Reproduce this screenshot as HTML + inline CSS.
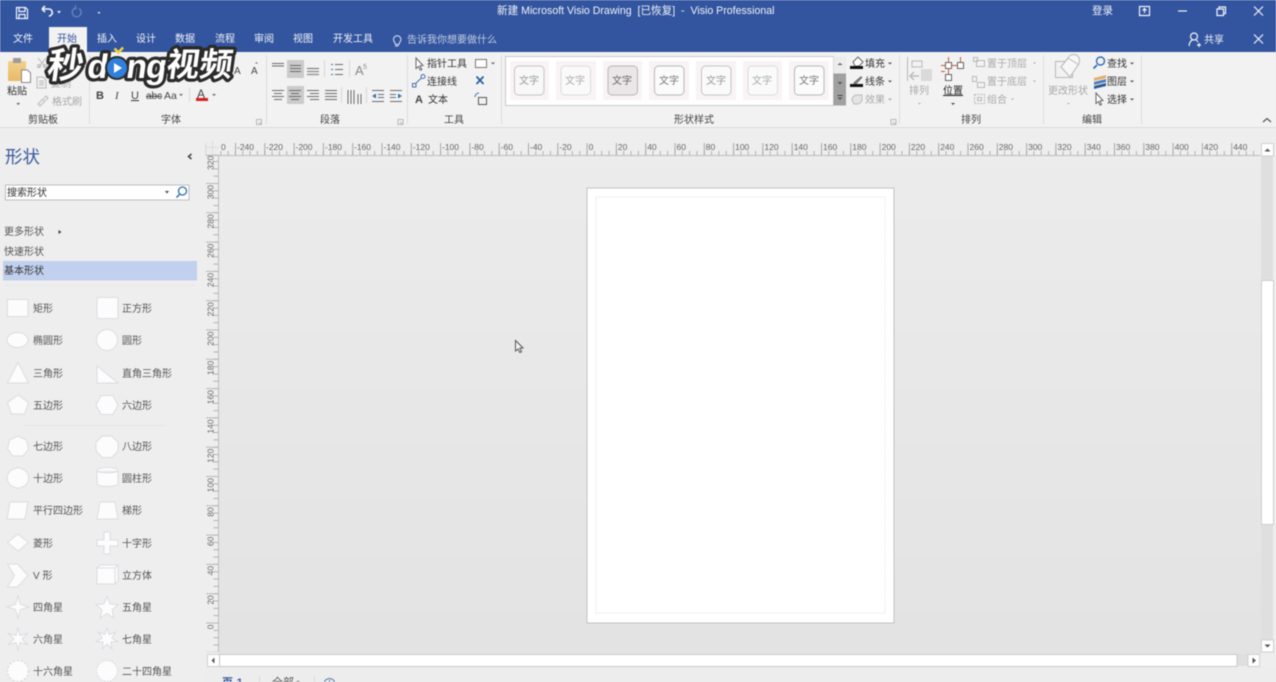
<!DOCTYPE html>
<html lang="zh"><head><meta charset="utf-8"><title>Visio</title>
<style>
html,body{margin:0;padding:0;background:#ececec;overflow:hidden}
svg{display:block;filter:blur(.4px)}
text{font-family:"Liberation Sans","Noto Sans CJK SC",sans-serif;font-size:10px;fill:#444}
.w text{fill:#f0f3fa}
.g text{fill:#a8a8a8}
.s text{fill:#555}
.rh text{font-size:8.5px;fill:#666}
.rv text{font-size:8.5px;fill:#666;text-anchor:end}
.sh *{fill:#fcfcfd;stroke:#dddbe2;stroke-width:1}
.ic{fill:none;stroke:#6a6a6a;stroke-width:1}
.ig{fill:none;stroke:#b8b8b8;stroke-width:1}
.wm{font-weight:bold;fill:#fff;stroke:#2a2a2a;stroke-width:6.5px;paint-order:stroke;stroke-linejoin:round}
</style></head><body>
<svg width="1276" height="682" viewBox="0 0 1276 682" xmlns="http://www.w3.org/2000/svg">
<defs>
<linearGradient id="cv" x1="0" y1="0" x2="0" y2="1"><stop offset="0" stop-color="#ececec"/><stop offset="1" stop-color="#e3e3e3"/></linearGradient>
<linearGradient id="clip" x1="0" y1="0" x2="0" y2="1"><stop offset="0" stop-color="#f2d08a"/><stop offset="1" stop-color="#e9b968"/></linearGradient>
</defs>
<!-- backgrounds -->
<rect width="1276" height="682" fill="#eeeeee"/>
<rect x="219" y="155" width="1042" height="499" fill="url(#cv)"/>
<rect width="1276" height="52" fill="#33559f"/>
<rect y="52" width="1276" height="75" fill="#f2f2f2"/>
<rect y="127" width="1276" height="1" fill="#dcdcdc"/>
<rect x="49" y="27" width="38" height="26" fill="#f2f2f2"/>

<!-- title bar -->
<g class="w">
<text x="497" y="14" style="font-size:10.6px;white-space:pre">新建 Microsoft Visio Drawing  [已恢复]  -  Visio Professional</text>
<text x="1092" y="14" style="font-size:10.5px">登录</text>
<text x="13" y="42">文件</text><text x="97" y="42">插入</text><text x="136" y="42">设计</text><text x="175" y="42">数据</text><text x="215" y="42">流程</text><text x="254" y="42">审阅</text><text x="293" y="42">视图</text><text x="333" y="42">开发工具</text>
<text x="407" y="43" style="fill:#c3cde3">告诉我你想要做什么</text>
<text x="1204" y="43">共享</text>
</g>
<text x="57" y="42" style="fill:#33559f">开始</text>
<g fill="none" stroke="#f0f3fa" stroke-width="1.2">
<path d="M16.500 7.500h9l2 2v9h-11z"/><path d="M19 7.500v4h6v-4M19 18.500v-4h6v4"/>
<path d="M42 9l3-3M42 9l3 3M42.500 9h6a3.500 3.500 0 0 1 2 6.500l-1.500 .8" stroke-width="1.600"/>
<path d="M1139.500 6.500h10v9h-10z"/><path d="M1144.500 13V8.500M1142.500 10.500l2-2 2 2"/>
<path d="M1178 11h9"/><path d="M1217 9h6.500v6.500h-6.500zM1219 9V7h6.500v6.500h-2"/>
<path d="M1254 6.500l9 9M1263 6.500l-9 9M1254 34.500l9 9M1263 34.500l-9 9"/>
<circle cx="1194" cy="36.500" r="3.500"/><path d="M1189 46c.5-4 2-5.500 3.500-6M1199 43v4M1197 45h4M1196 40c1 .5 1.500 1 2 2"/>
</g>
<path d="M57 11h4l-2 2.500zM97.500 10h3M97.500 12h3l-1.500 2z" fill="#e5e9f3"/>
<path d="M79 8.500a4.500 4.500 0 1 1-3.500-.5M75 5.500l1 3 -3 .5" fill="none" stroke="#6883bb" stroke-width="1.300"/>
<path d="M395 46h3.500M395.500 44.500c0-2-2-2.500-2-5a3.700 3.700 0 0 1 7.400 0c0 2.500-2 3-2 5z" fill="none" stroke="#dfe4f0"/>

<!-- ribbon separators -->
<g fill="#dcdcdc"><rect x="89" y="55" width="1" height="69"/><rect x="266" y="55" width="1" height="69"/><rect x="407" y="55" width="1" height="69"/><rect x="501" y="55" width="1" height="69"/><rect x="899" y="55" width="1" height="69"/><rect x="1043" y="55" width="1" height="69"/><rect x="1141" y="55" width="1" height="69"/></g>

<!-- group labels -->
<g>
<text x="28" y="123">剪贴板</text><text x="161" y="123">字体</text><text x="320" y="123">段落</text><text x="444" y="123">工具</text><text x="674" y="123">形状样式</text><text x="961" y="123">排列</text><text x="1082" y="123">编辑</text>
</g>
<g class="ig"><path d="M256.500 119.500h5v5h-5zM259 122l2 2M398 119.500h5v5h-5zM400 122l2 2M891 119.500h5v5h-5zM893 122l2 2"/></g>
<path d="M1263 122l4-3.500 4 3.500" fill="none" stroke="#555" stroke-width="1.200"/>

<!-- clipboard -->
<rect x="8" y="61" width="18" height="20" rx="1" fill="url(#clip)"/>
<rect x="13" y="58" width="8" height="5" fill="#9b9b9b"/>
<path d="M21.500 70h6l3 3v9.500h-9z" fill="#fff" stroke="#888"/>
<text x="7" y="94.500" style="fill:#333">粘贴</text>
<path d="M16.500 103h3.500l-1.750 2z" fill="#555"/>
<g class="ig"><path d="M38 58l8 10M46 58l-8 10"/><circle cx="39" cy="66" r="1.500"/><circle cx="45" cy="66" r="1.500"/><path d="M37 77h6l3 3v8h-9zM39 81h5M39 83h5M39 85h5"/><path d="M38 104l5-5 2 2-5 5zM44 98l2-2 2 2-2 2"/></g>
<g class="g"><text x="51" y="87">复制</text><text x="52" y="105">格式刷</text></g>

<!-- font group -->
<g>
<text x="96" y="99" style="font-weight:bold;font-size:11px">B</text>
<text x="115" y="99" style="font-style:italic;font-size:11px;font-family:'Liberation Serif',serif">I</text>
<text x="131" y="99" style="font-size:11px;text-decoration:underline">U</text>
<text x="146" y="99" style="font-size:10px;text-decoration:line-through">abc</text>
<text x="164" y="99" style="font-size:10.500px">Aa</text>
<text x="197" y="98" style="font-size:12px">A</text>
<text x="234" y="74" style="font-size:10px">A</text><text x="251" y="74" style="font-size:10px">A</text>
</g>
<rect x="196" y="98" width="12" height="3" fill="#d92020"/>
<rect x="189" y="88" width="1" height="14" fill="#d8d8d8"/>
<path d="M179 94h4l-2 2zM212 94h4l-2 2zM255 63.500h3l-1.500 -1.500z" fill="#666"/>

<!-- paragraph group -->
<rect x="287" y="60" width="17" height="18" fill="#cbcbcb"/>
<rect x="287" y="86" width="17" height="18" fill="#cbcbcb"/>
<g class="ic">
<path d="M272 63.500h12M272 66h12M290 65.500h11M290 68.500h11M290 71.500h11M307 68.500h12" />
<path d="M307 71.500h12M307 74.500h12" stroke="#999" stroke-width="1.500"/>
<path d="M272 90.500h12M274 93.500h8M272 96.500h12M274 99.500h8M289 90.500h12M291 93.500h8M289 96.500h12M291 99.500h8M307 90.500h12M310 93.500h9M307 96.500h12M310 99.500h9M325 90.500h12M325 93.500h12M325 96.500h12M325 99.500h12"/>
<path d="M335 64.500h8M335 69.500h8M335 74.500h8" /><path d="M331 64.500h2M331 69.500h2M331 74.500h2" stroke="#3a6fb5"/>
<path d="M348 90v14M351 90v14M354 90v14M358 94v10M361 94v10"/>
<path d="M372 90.500h12M378 94.500h6M378 97.500h6M372 101.500h12M390 90.500h12M390 94.500h6M390 97.500h6M390 101.500h12"/>
</g>
<path d="M372 96l4-2.500v5zM402 96l-4-2.500v5z" fill="#3a6fb5"/>
<rect x="324" y="60" width="1" height="17" fill="#d8d8d8"/><rect x="349" y="60" width="1" height="17" fill="#d8d8d8"/><rect x="341" y="87" width="1" height="16" fill="#d8d8d8"/><rect x="366" y="87" width="1" height="16" fill="#d8d8d8"/>
<text x="355" y="75" style="font-size:13px;fill:#888">A</text><text x="363" y="69" style="font-size:7px;fill:#888">5</text>

<!-- tools group -->
<path d="M416 58l7 7.500-3 .3 1.800 3.700-1.500.7-1.800-3.700-2.500 2z" fill="#fff" stroke="#666"/>
<text x="427" y="67" style="fill:#333">指针工具</text>
<rect x="475.500" y="59.500" width="11" height="8" fill="#fff" stroke="#777"/>
<path d="M491 62.500h4l-2 2z" fill="#666"/>
<g fill="none" stroke="#4a6ea8"><rect x="412.500" y="83.500" width="3.500" height="3.500"/><circle cx="423" cy="76.500" r="2"/><path d="M416 83l5.500-5"/></g>
<text x="427" y="85" style="fill:#333">连接线</text>
<path d="M476.500 76.500l7 7.500M483.500 76.500l-7 7.500" stroke="#2f5fa5" stroke-width="1.800"/>
<text x="415" y="103" style="font-size:11px;font-weight:bold;fill:#444">A</text>
<text x="428" y="103" style="fill:#333">文本</text>
<g fill="none" stroke="#555"><rect x="478.500" y="97.500" width="8" height="7"/><path d="M475 97a4 4 0 0 1 4-4" stroke="#3a6fb5"/></g>

<!-- shape styles gallery -->
<rect x="505.500" y="56.500" width="328" height="49" fill="#fff" stroke="#c9c9c9"/>
<rect x="833.500" y="56.500" width="12.500" height="17" fill="#ececec"/>
<rect x="833.500" y="73.500" width="12.500" height="32" fill="#a0a0a0"/>
<path d="M837.500 65h5l-2.500-2zM837.500 82h5l-2.500 2.500zM837.500 97.500h5l-2.500 2.500z" fill="#555" stroke="none"/>
<path d="M837.500 95.500h5" stroke="#444"/>
<g fill="#f9f3f5"><rect x="510" y="61" width="39" height="39"/><rect x="556" y="61" width="40" height="39"/><rect x="603" y="61" width="39" height="39"/><rect x="649" y="61" width="40" height="39"/><rect x="696" y="61" width="40" height="39"/><rect x="743" y="61" width="39" height="39"/><rect x="789" y="61" width="40" height="39"/></g>
<g stroke-width="1">
<rect x="514.500" y="66" width="29.500" height="29" rx="4" fill="#f8f8f8" stroke="#c4c4c4"/>
<rect x="561" y="66" width="29.500" height="29" rx="4" fill="#fafafa" stroke="#dcdcdc"/>
<rect x="608" y="66" width="29.500" height="29" rx="4" fill="#ebe7e9" stroke="#b5b5b5"/>
<rect x="654.500" y="66" width="29.500" height="29" rx="4" fill="#fbfbfb" stroke="#b8b8b8"/>
<rect x="701.500" y="66" width="29.500" height="29" rx="4" fill="#fafafa" stroke="#c4c4c4"/>
<rect x="748" y="66" width="29.500" height="29" rx="4" fill="#fafafa" stroke="#dcdcdc"/>
<rect x="794.500" y="66" width="29.500" height="29" rx="4" fill="#fbfbfb" stroke="#b8b8b8"/>
</g>
<g style="font-size:10px">
<text x="519" y="84" style="fill:#999">文字</text><text x="565" y="84" style="fill:#aaa">文字</text><text x="612" y="84" style="fill:#666">文字</text><text x="659" y="84" style="fill:#777">文字</text><text x="706" y="84" style="fill:#999">文字</text><text x="752" y="84" style="fill:#aaa">文字</text><text x="799" y="84" style="fill:#777">文字</text>
</g>
<!-- fill/line/effect -->
<path d="M853 62l5-5 5 5-4 4h-4z" fill="#fff" stroke="#666"/><rect x="850" y="66" width="13" height="3" fill="#111"/>
<path d="M853 83l8-7 1.500 1.500-7 7.500z" fill="#777"/><rect x="850" y="84" width="13" height="3" fill="#111"/>
<path d="M852 100a5 5 0 0 1 5-5h5v5a5 5 0 0 1-5 4h-3z" fill="#e4e4e4" stroke="#bbb"/>
<text x="865" y="67" style="fill:#333">填充</text><text x="865" y="85" style="fill:#333">线条</text>
<g class="g"><text x="865" y="103">效果</text></g>
<path d="M888 62.500h4l-2 2zM888 80.500h4l-2 2z" fill="#555"/><path d="M888 98.500h4l-2 2z" fill="#aaa"/>

<!-- arrange group -->
<g class="ig"><path d="M907.500 57v24M912 61h10v6h-10z"/></g><rect x="921" y="69" width="11" height="12" fill="#dadada"/><path d="M911 76h8M914 72l-4 4 4 4" fill="none" stroke="#bbb" stroke-width="1.400"/>
<g class="g"><text x="909" y="94">排列</text><text x="987" y="67">置于顶层</text><text x="987" y="85">置于底层</text><text x="987" y="103">组合</text><text x="1048" y="94">更改形状</text></g>
<path d="M918 103h3l-1.500 1.500zM1067 103h3l-1.500 1.500zM1033 62.500h3l-1.500 1.500zM1033 80.500h3l-1.500 1.500zM1011 98.500h3l-1.500 1.500z" fill="#aaa"/>
<g fill="#fff" stroke="#666"><rect x="945.500" y="62.500" width="6" height="6"/><rect x="957.500" y="62.500" width="6" height="6"/><rect x="945.500" y="74.500" width="6" height="6"/></g>
<path d="M941 65.500h4M952 65.500h5M948.500 57v5M960.500 57v5M948.500 69v5M941 71.500h4" stroke="#c85a3e" fill="none"/>
<text x="943" y="94" style="fill:#222;text-decoration:underline">位置</text>
<path d="M951 103h4l-2 2z" fill="#444"/>
<g class="ig"><rect x="973.500" y="57.500" width="4" height="4"/><rect x="976.500" y="60.500" width="8" height="6"/><rect x="972.500" y="76.500" width="4" height="5"/><rect x="977.500" y="82.500" width="7" height="5"/><rect x="974.500" y="94.500" width="10" height="9" stroke-dasharray="2 1"/><rect x="977.500" y="97.500" width="4" height="3"/></g>
<g class="ig"><rect x="1055.500" y="61.500" width="17" height="16"/><path d="M1068 58a6 6 0 0 1 11 5l-1 2-8 12-9-10z" fill="#f7f7f7"/><path d="M1061 67l7-9 11 7"/></g>
<!-- editing -->
<circle cx="1100.500" cy="61" r="4" fill="none" stroke="#2d6db5" stroke-width="1.400"/><path d="M1097 65l-3.500 3.500" stroke="#2d6db5" stroke-width="1.800"/>
<path d="M1094 78l12-3v3l-12 3z" fill="#e6ad62"/><path d="M1094 82l12-3v3l-12 3z" fill="#4a7fc0"/><path d="M1094 86l12-3v3l-12 3z" fill="#2d5a90"/>
<path d="M1096 93l7 7.500-3 .3 1.500 3.700-1.500.7-1.500-3.700-2.500 2z" fill="#fff" stroke="#666"/>
<text x="1107" y="67" style="fill:#333">查找</text><text x="1107" y="85" style="fill:#333">图层</text><text x="1107" y="103" style="fill:#333">选择</text>
<path d="M1130 62.500h4l-2 2zM1130 80.500h4l-2 2zM1130 98.500h4l-2 2z" fill="#555"/>

<!-- shapes pane -->
<text x="5" y="163" style="font-size:17.500px;fill:#3a5a9e">形状</text>
<path d="M191.500 154l-3 2.500 3 2.500" fill="none" stroke="#444" stroke-width="1.500"/>
<rect x="5.500" y="185" width="183.500" height="15" fill="#fff" stroke="#bcbcbc"/>
<text x="7" y="196" style="fill:#333">搜索形状</text>
<path d="M165 191h4l-2 2.500z" fill="#444"/>
<circle cx="182.500" cy="191" r="4" fill="none" stroke="#2d6db5" stroke-width="1.300"/><path d="M179.500 194.500l-3 3" stroke="#2d6db5" stroke-width="1.500"/>
<text x="4" y="235" style="fill:#555">更多形状</text><path d="M58.500 230l3 2-3 2z" fill="#444"/>
<text x="4" y="255" style="fill:#555">快速形状</text>
<rect x="3" y="261" width="194" height="19.500" fill="#c1d0ee"/>
<text x="4" y="274" style="fill:#333">基本形状</text>
<rect x="5" y="285" width="190" height="1" fill="#e8e8e8"/>
<rect x="25" y="425" width="140" height="1" fill="#e6e6e6"/>

<g class="sh">
<rect x="7.500" y="299.500" width="20.500" height="17"/>
<rect x="97" y="297.500" width="21" height="21"/>
<ellipse cx="17.500" cy="340" rx="10.500" ry="7.500"/>
<circle cx="107" cy="340" r="10.500"/>
<path d="M18 362.500l10.500 20.500h-21z"/>
<path d="M97 366v17h21z"/>
<path d="M18 395l10.500 7.500-4 11.500h-13l-4-11.500z"/>
<path d="M101 395.500h12l5 9.500-5 9.500h-12l-5-9.500z"/>
<path d="M18 436l8.500 4 2 9-5.500 7h-10l-5.500-7 2-9z"/>
<path d="M102.500 436h9l6.500 6v9l-6.500 6.500h-9l-6.500-6.500v-9z"/>
<path d="M18 467.500l7 2.500 3.500 5 0 6-3.500 5-7 2.500-7-2.500-3.500-5v-6l3.500-5z"/>
<path d="M97 470.500c0-4 21-4 21 0v13c0 4-21 4-21 0zM97 470.500c0 3 21 3 21 0"/>
<path d="M10 502h18l-3 17h-18z"/>
<path d="M100 502h15l3 17h-21z"/>
<path d="M18 534l10.500 8.500-10.500 8.500-10.500-8.500z"/>
<path d="M104 532h6v8h8v6h-8v8h-6v-8h-7v-6h7z"/>
<path d="M7.500 564h10l10.500 11.500-10.500 11.500h-10l7-11.500z"/>
<path d="M97 568h18v16h-18zM97 568l3-3h18l-3 3zM115 568l3-3v16l-3 3z"/>
<path d="M18 596l2.500 8.500 8.500 2.500-8.500 2.500-2.500 8.500-2.500-8.500-8.500-2.500 8.500-2.500z"/>
<path d="M107 596.500l3 7.500 8 .5-6 5.500 2 8-7-4.500-7 4.500 2-8-6-5.500 8-.5z"/>
<path d="M18 628L20 635.500 27.500 633.500 22 639 27.500 644.500 20 642.500 18 650 16 642.500 8.500 644.500 14 639 8.500 633.500 16 635.500z"/>
<path d="M107 628L109.200 634.500 115.600 632.100 111.900 637.900 117.700 641.400 110.900 642.100 111.800 648.900 107 644 102.200 648.900 103.100 642.100 96.300 641.400 102.100 637.900 98.400 632.100 104.800 634.500z"/>
<circle cx="18" cy="671" r="10.500" stroke-dasharray="2 2" style="stroke-width:1.500"/>
<circle cx="107" cy="671" r="10.500" stroke-dasharray="1.500 1.500" style="stroke-width:1.500"/>
</g>
<g class="s">
<text x="33" y="312">矩形</text><text x="122" y="312">正方形</text>
<text x="33" y="344">椭圆形</text><text x="122" y="344">圆形</text>
<text x="33" y="377">三角形</text><text x="122" y="377">直角三角形</text>
<text x="33" y="409">五边形</text><text x="122" y="409">六边形</text>
<text x="33" y="450">七边形</text><text x="122" y="450">八边形</text>
<text x="33" y="482">十边形</text><text x="122" y="482">圆柱形</text>
<text x="33" y="514">平行四边形</text><text x="122" y="514">梯形</text>
<text x="33" y="547">菱形</text><text x="122" y="547">十字形</text>
<text x="33" y="579">V 形</text><text x="122" y="579">立方体</text>
<text x="33" y="611">四角星</text><text x="122" y="611">五角星</text>
<text x="33" y="643">六角星</text><text x="122" y="643">七角星</text>
<text x="33" y="675">十六角星</text><text x="122" y="675">二十四角星</text>
</g>

<!-- rulers -->
<g stroke="#b2b2b2" fill="none">
<path d="M206 155.500H1260" stroke="#bdbdbd"/>
<path d="M220.300 153H1260" stroke-width="4" stroke-dasharray="1 6.325"/>
<path d="M205.700 149H1260" stroke-width="12" stroke-dasharray="1 28.300" stroke="#a8a8a8"/>
<path d="M218.500 155V652" stroke="#bdbdbd"/>
<path d="M216 153.700V652" stroke-width="5" stroke-dasharray="1 6.325"/>
<path d="M212 153.700V652" stroke-width="12" stroke-dasharray="1 28.300" stroke="#b8b8b8"/>
</g>
<g class="rh">
<text x="221" y="150">0</text><text x="237" y="150">-240</text><text x="266" y="150">-220</text><text x="295.500" y="150">-200</text><text x="325" y="150">-180</text><text x="354" y="150">-160</text><text x="383.500" y="150">-140</text><text x="412.800" y="150">-120</text><text x="442" y="150">-100</text><text x="471.400" y="150">-80</text><text x="500.700" y="150">-60</text><text x="530" y="150">-40</text><text x="559.300" y="150">-20</text><text x="588.600" y="150">0</text><text x="617.900" y="150">20</text><text x="647.200" y="150">40</text><text x="676.500" y="150">60</text><text x="705.800" y="150">80</text><text x="735.100" y="150">100</text><text x="764.400" y="150">120</text><text x="793.700" y="150">140</text><text x="823" y="150">160</text><text x="852.300" y="150">180</text><text x="881.600" y="150">200</text><text x="910.900" y="150">220</text><text x="940.200" y="150">240</text><text x="969.500" y="150">260</text><text x="998.800" y="150">280</text><text x="1028.100" y="150">300</text><text x="1057.400" y="150">320</text><text x="1086.700" y="150">340</text><text x="1116" y="150">360</text><text x="1145.300" y="150">380</text><text x="1174.600" y="150">400</text><text x="1203.900" y="150">420</text><text x="1233.200" y="150">440</text>
</g>
<g class="rv">
<text transform="translate(213.500 155.700) rotate(-90)">320</text>
<text transform="translate(213.500 185) rotate(-90)">300</text>
<text transform="translate(213.500 214.300) rotate(-90)">280</text>
<text transform="translate(213.500 243.600) rotate(-90)">260</text>
<text transform="translate(213.500 272.900) rotate(-90)">240</text>
<text transform="translate(213.500 302.200) rotate(-90)">220</text>
<text transform="translate(213.500 331.500) rotate(-90)">200</text>
<text transform="translate(213.500 360.800) rotate(-90)">180</text>
<text transform="translate(213.500 390.100) rotate(-90)">160</text>
<text transform="translate(213.500 419.400) rotate(-90)">140</text>
<text transform="translate(213.500 448.700) rotate(-90)">120</text>
<text transform="translate(213.500 478) rotate(-90)">100</text>
<text transform="translate(213.500 507.300) rotate(-90)">80</text>
<text transform="translate(213.500 536.600) rotate(-90)">60</text>
<text transform="translate(213.500 565.900) rotate(-90)">40</text>
<text transform="translate(213.500 595.200) rotate(-90)">20</text>
<text transform="translate(213.500 624.500) rotate(-90)">0</text>
</g>
<rect x="206" y="141" width="13" height="13.500" fill="#ededed"/>
<path d="M212.500 141v13M206 147.500h13" stroke="#dcdcdc"/>

<!-- page -->
<rect x="587" y="188" width="307" height="435" fill="#fff" stroke="#c2c2c2"/>
<rect x="596" y="197" width="289" height="416" fill="none" stroke="#e8e8e8" stroke-dasharray="2 1"/>

<!-- cursor -->
<path d="M515.500 340.500v10.500l2.500-2 1.800 3.500 1.800-.8-1.800-3.500 3.200-.2z" fill="#f4f4f4" stroke="#555"/>

<!-- vertical scrollbar -->
<rect x="1261" y="143" width="12" height="509" fill="#dfdfdf"/>
<rect x="1261.500" y="143.500" width="12" height="12.500" fill="#fff" stroke="#cfcfcf"/>
<path d="M1264.500 151.500h6l-3-3z" fill="#555"/>
<rect x="1261.500" y="280.500" width="12" height="244" fill="#fff" stroke="#cfcfcf"/>
<rect x="1261.500" y="640" width="12" height="12" fill="#fff" stroke="#cfcfcf"/>
<path d="M1264.500 644.500h6l-3 3z" fill="#555"/>
<!-- horizontal scrollbar -->
<rect x="207" y="654" width="1052" height="12" fill="#dfdfdf"/>
<rect x="207.500" y="654.500" width="12" height="12" fill="#fff" stroke="#cfcfcf"/>
<path d="M214.500 657.500v6l-3-3z" fill="#555"/>
<rect x="219.500" y="654.500" width="1017.500" height="12" fill="#fff" stroke="#c8c8c8"/>
<rect x="1248" y="654.500" width="11.500" height="12" fill="#fff" stroke="#cfcfcf"/>
<path d="M1252.500 657.500v6l3.500-3z" fill="#555"/>
<!-- status -->
<rect x="205" y="667" width="1071" height="15" fill="#ededed"/>
<text x="222" y="686" style="font-size:11px;fill:#3a5a9e;font-weight:bold">页-1</text>
<text x="272" y="686" style="font-size:11px;fill:#555">全部</text>
<path d="M296 681h4l-2 1z" fill="#555"/>
<rect x="259" y="676" width="1" height="6" fill="#d8d8d8"/><rect x="314" y="676" width="1" height="6" fill="#d8d8d8"/>
<circle cx="329.500" cy="684" r="5.500" fill="none" stroke="#5577b0"/><path d="M329.500 680v4" stroke="#5577b0"/>

<!-- watermark -->
<g transform="translate(46 78) skewX(-8)">
<text class="wm" x="0" y="0" style="font-size:36px">秒</text>
<text class="wm" x="40" y="0" style="font-size:34px">d</text>
<text class="wm" x="79" y="0" style="font-size:34px;letter-spacing:-1px">ng</text>
<text class="wm" x="119" y="-2" style="font-size:33px">视频</text>
</g>
<circle cx="117" cy="68" r="12" fill="#2a2a2a"/>
<circle cx="117" cy="68" r="10" fill="#2f7fdc"/>
<path d="M114 63l8 5-8 5z" fill="#fff"/>
<path d="M114.500 48.500l4 4 4.500-5" fill="none" stroke="#f2d23a" stroke-width="2.500"/>
</svg>
</body></html>
